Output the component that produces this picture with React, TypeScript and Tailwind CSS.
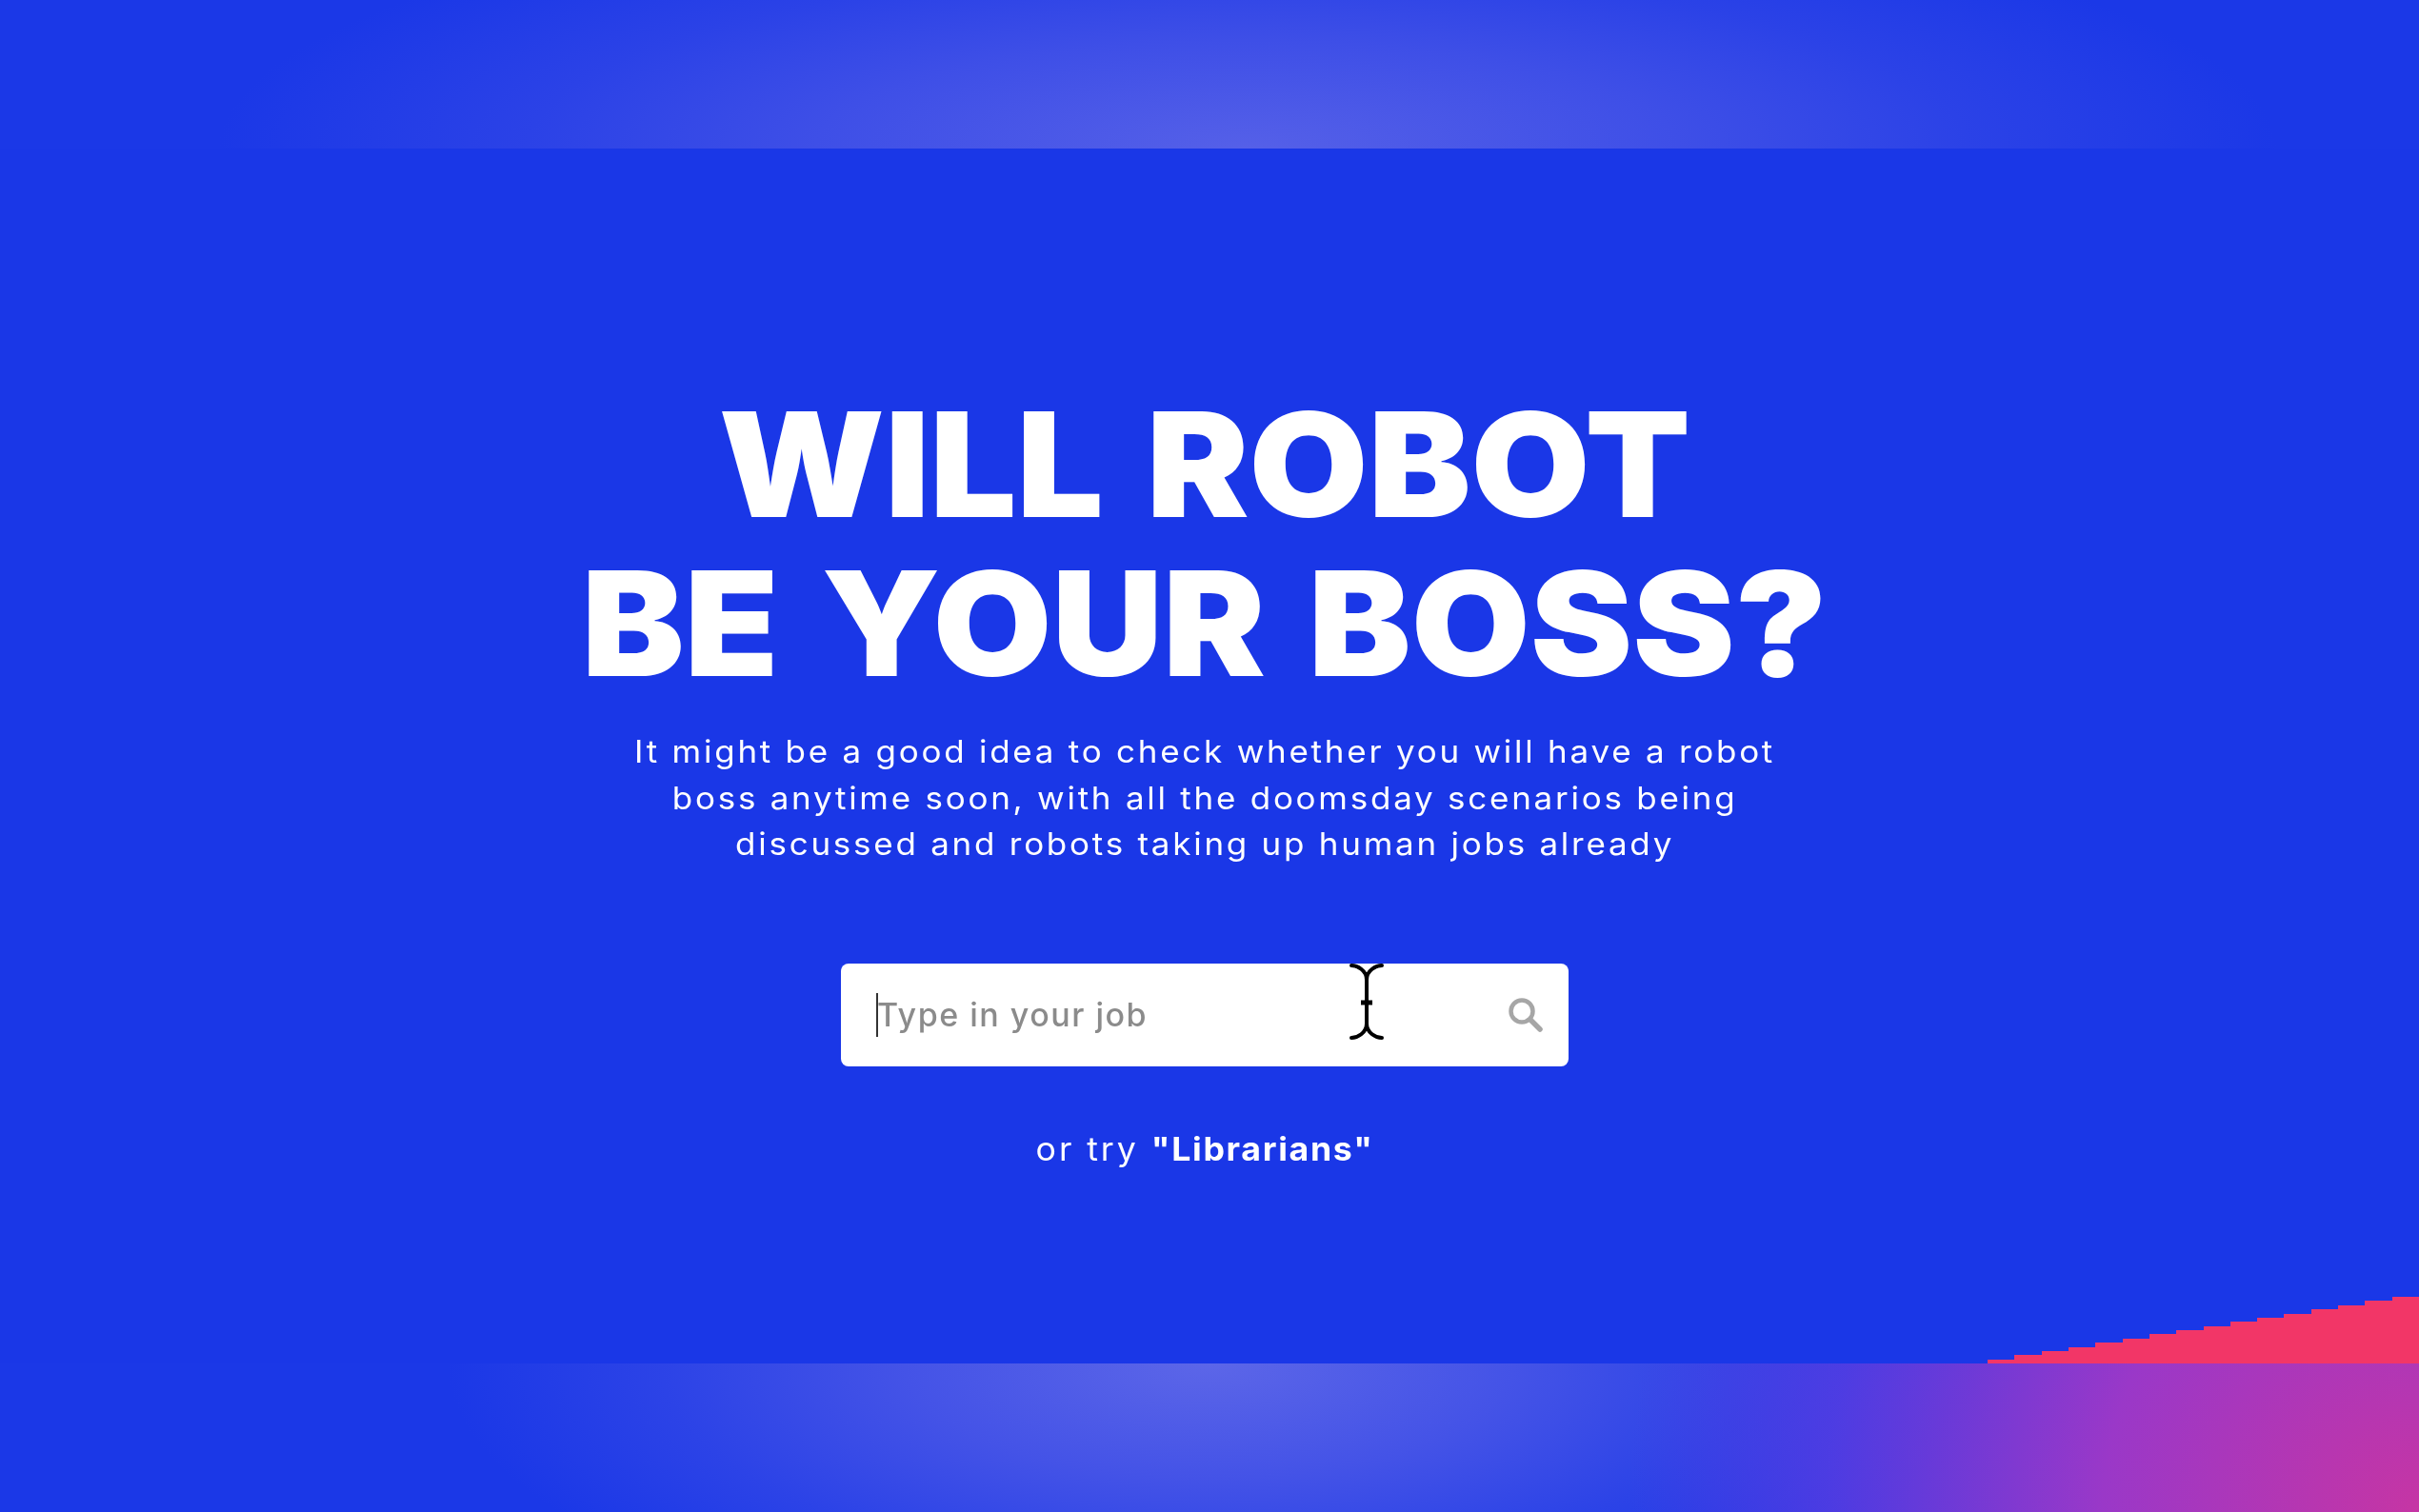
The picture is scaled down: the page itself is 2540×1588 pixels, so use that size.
const steps = 16;
const stepPoints = (() => {
  const w = 453;
  const h = 70;
  const pts: string[] = [`0,${h}`];
  for (let i = 0; i < steps; i++) {
    const x = Math.round((i * w) / steps);
    const y = Math.round(h - ((i + 1) * h) / steps);
    const prevY = Math.round(h - (i * h) / steps);
    pts.push(`${x},${prevY}`, `${x},${y}`);
  }
  pts.push(`${w + 4},0`, `${w + 4},${h + 4}`, `0,${h + 4}`);
  return pts.join(" ");
})();

export default function App() {
  return (
    <div className="flex h-[1588px] w-[2540px] flex-col overflow-hidden bg-[#1a37e7] font-['Inter',sans-serif] text-white">
      <div className="h-[156px] shrink-0 bg-[radial-gradient(ellipse_1080px_270px_at_1310px_100%,#5560e8_0%,#3e4fe7_42%,#2b42e7_70%,#1b38e7_100%)]" />

      <main className="relative flex flex-1 flex-col items-center pt-[249px] pr-[10px]">
        <h1 className="scale-x-[1.062] text-center text-[152px] leading-[167px] font-black tracking-[0px] [word-spacing:12px] whitespace-nowrap blur-[0.6px]">
          <div>WILL ROBOT</div>
          <div>BE YOUR BOSS?</div>
        </h1>
        <p className="mt-[26px] scale-x-[1.06] text-center text-[33px] leading-[48.5px] font-normal tracking-[2.6px] whitespace-nowrap blur-[0.5px]">
          It might be a good idea to check whether you will have a robot
          <br />
          boss anytime soon, with all the doomsday scenarios being
          <br />
          discussed and robots taking up human jobs already
        </p>
        <div className="relative mt-[101px] flex h-[108px] w-[764px] items-center rounded-[8px] bg-white pr-[26px] pl-[38px]">
          <div className="absolute top-[31px] left-[37px] h-[46px] w-[2px] bg-[#333]" />
          <input
            readOnly
            placeholder="Type in your job"
            className="min-w-0 flex-1 bg-transparent text-[34px] font-medium tracking-[1.5px] text-[#8b8b8b] outline-none placeholder:text-[#8b8b8b] blur-[0.5px]"
          />
          <svg width="38" height="38" viewBox="0 0 38 38" fill="none" className="shrink-0 blur-[0.5px]">
            <circle cx="15" cy="15" r="11.5" stroke="#a6a6a6" strokeWidth="4.5" />
            <path d="M24 24 L34 34" stroke="#a6a6a6" strokeWidth="5.5" strokeLinecap="round" />
          </svg>
          <svg width="36" height="82" viewBox="0 0 36 82" fill="none" className="absolute top-[-1px] left-[534px]">
            <path d="M2 3 C8 3 18 8 18 18 C18 8 28 3 34 3" stroke="#000" strokeWidth="4" strokeLinecap="round" />
            <path d="M18 14 V68" stroke="#000" strokeWidth="4" />
            <path d="M12 42 H24" stroke="#000" strokeWidth="5" />
            <path d="M2 79 C8 79 18 74 18 64 C18 74 28 79 34 79" stroke="#000" strokeWidth="4" strokeLinecap="round" />
          </svg>
        </div>
        <p className="mt-[63px] scale-x-[1.05] text-center text-[34px] leading-[48px] tracking-[2.8px] whitespace-nowrap blur-[0.5px]">
          or try <span className="font-bold tracking-[1.6px]">"Librarians"</span>
        </p>
        <svg width="457" height="74" viewBox="0 0 457 74" className="absolute right-[-4px] bottom-[-4px] blur-[0.6px]">
          <polygon points={stepPoints} fill="#f23667" />
        </svg>
      </main>

      <div className="relative h-[156px] shrink-0 bg-[radial-gradient(circle_830px_at_100%_100%,#c635a4_0%,#9a38c8_40%,rgba(90,60,225,0.75)_75%,rgba(27,56,232,0)_100%),radial-gradient(ellipse_800px_300px_at_1270px_0%,#5c66e8_0%,#4453e7_40%,#2c43e7_72%,#1b38e7_100%)]" />
    </div>
  );
}
